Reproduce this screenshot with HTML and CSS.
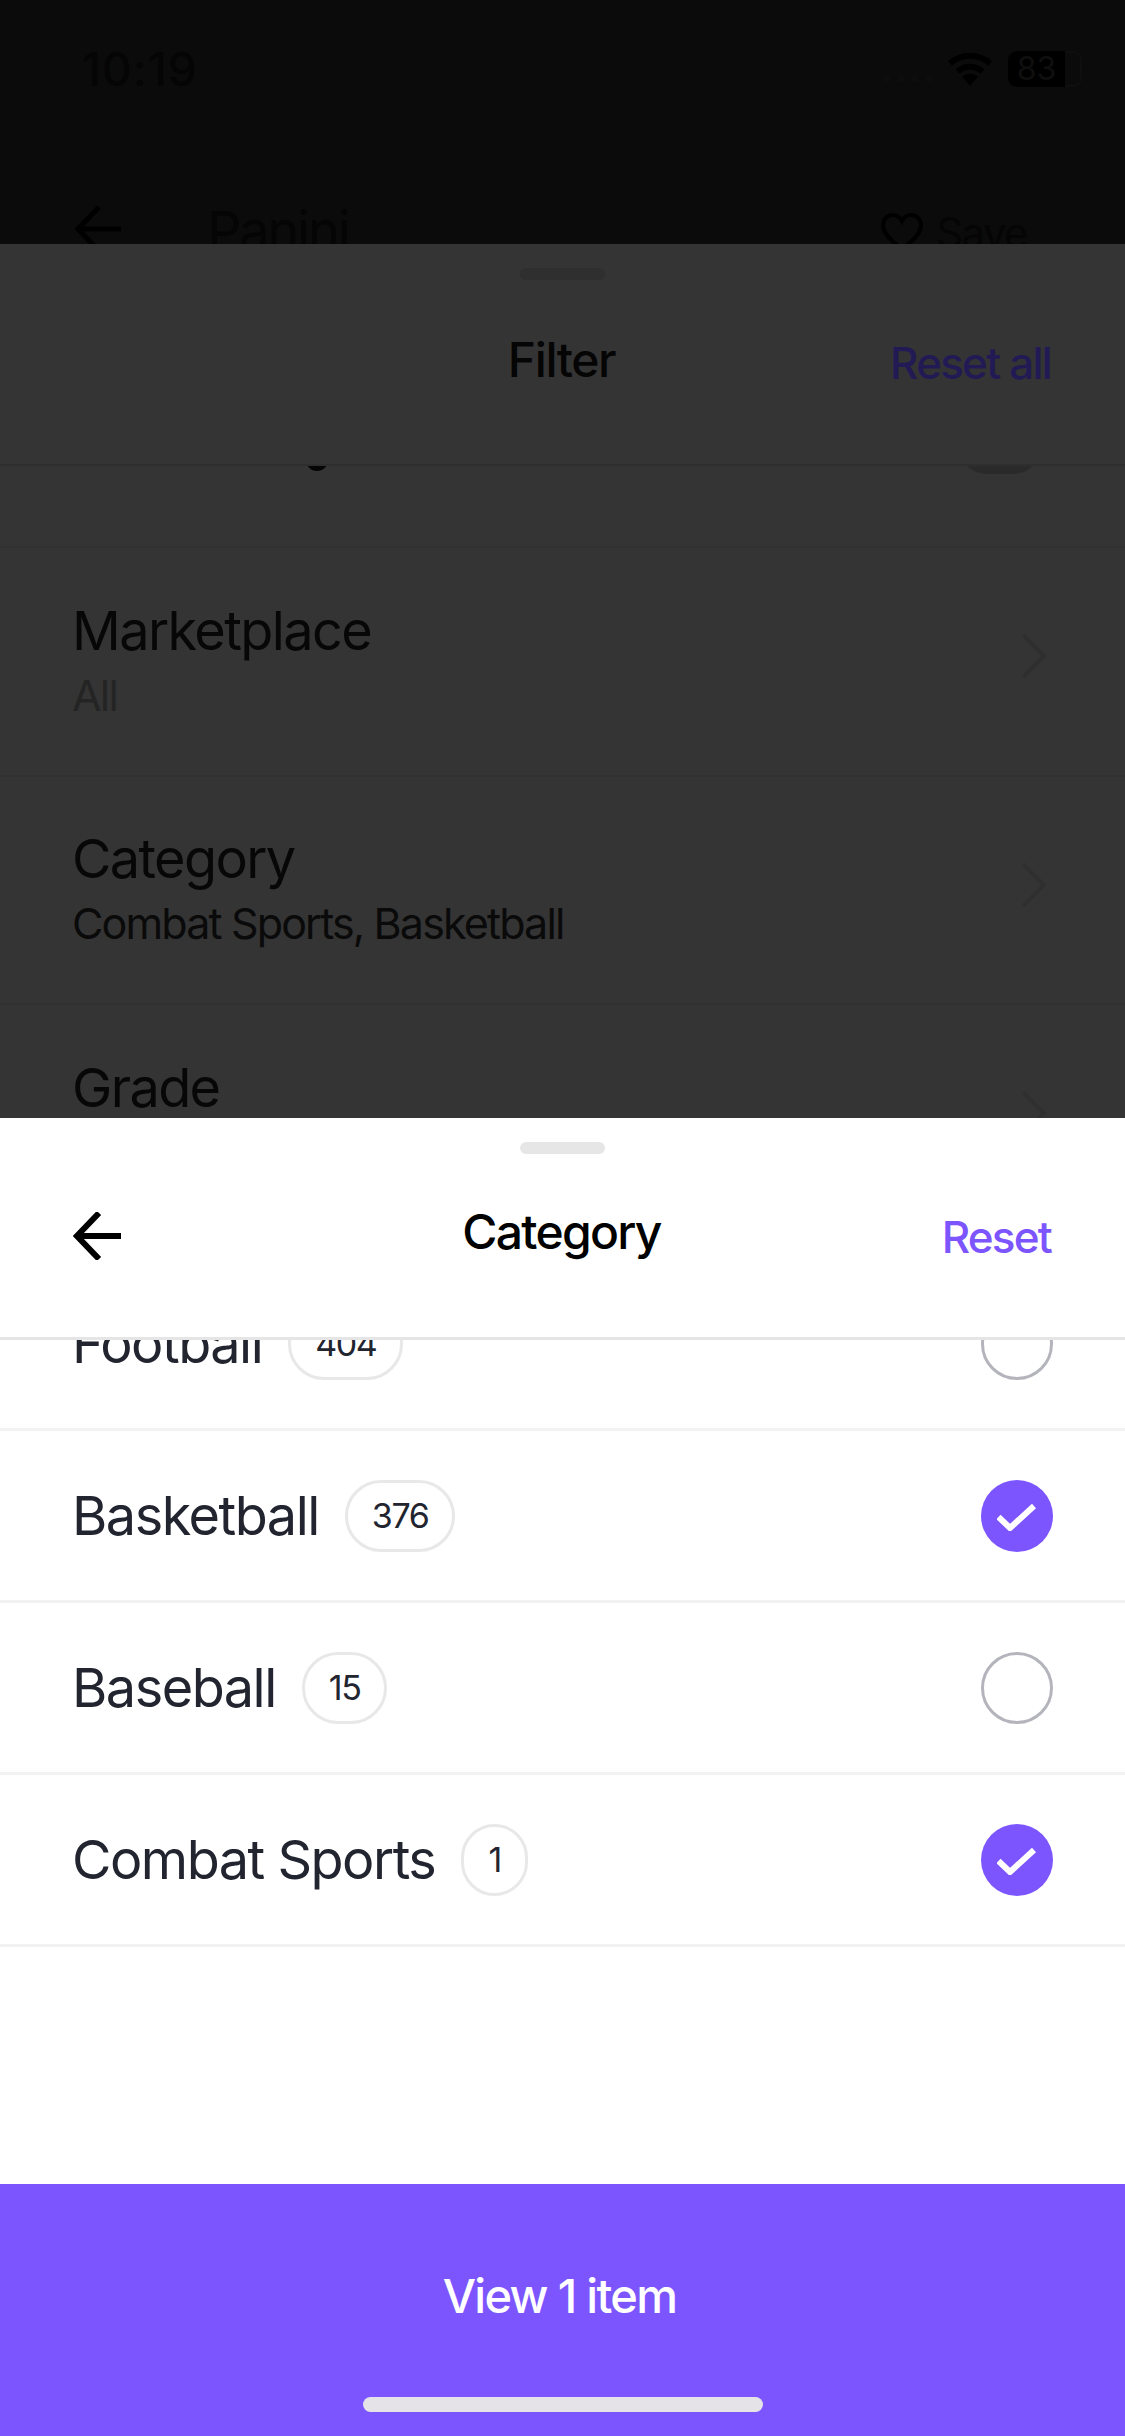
FILE: index.html
```html
<!DOCTYPE html>
<html lang="en">
<head>
<meta charset="utf-8">
<title>Category filter</title>
<link rel="stylesheet" href="styles.css">
</head>
<body>
<div class="screen">
  <section class="backdrop">
    <div class="status">
      <span class="time">10:19</span>
      <div class="status-icons">
        <svg class="signal" width="50" height="8" viewBox="0 0 50 8"><g fill="#0d0d0d"><circle cx="4" cy="4" r="3.500"/><circle cx="18" cy="4" r="3.500"/><circle cx="32" cy="4" r="3.500"/><circle cx="46" cy="4" r="3.500"/></g></svg>
        <svg class="wifi" width="46" height="34" viewBox="0 0 46 34"><path d="M23 34 15 24.500a12 12 0 0 1 16 0Z" fill="#000"/><path d="M10.500 19.500a18.500 18.500 0 0 1 25 0M3 11.500a29.500 29.500 0 0 1 40 0" fill="none" stroke="#000" stroke-width="6"/></svg>
        <div class="battery"><span class="battery-fill">83</span><span class="battery-tip"></span></div>
      </div>
    </div>
    <div class="topnav">
      <svg class="arrow arrow-dim" width="48" height="48" viewBox="0 0 48 48"><path d="M47 24H4M25 2 4 24l21 22" fill="none" stroke="#000" stroke-width="5"/></svg>
      <span class="topnav-title">Panini</span>
      <div class="save">
        <svg width="44" height="40" viewBox="0 0 44 40"><path d="M22 37C10 28 3 21 3 13 3 7 8 3 13 3c4 0 7 2 9 6 2-4 5-6 9-6 5 0 10 4 10 10 0 8-7 15-19 24Z" fill="none" stroke="#000" stroke-width="4"/></svg>
        <span>Save</span>
      </div>
    </div>
  </section>

  <section class="filter">
    <div class="handle handle-dim"></div>
    <header class="filter-head">
      <h2 class="filter-title">Filter</h2>
      <span class="filter-reset">Reset all</span>
    </header>
    <div class="filter-clip">
      <div class="filter-peek">
        <span class="peek-g"></span>
        <span class="peek-toggle"></span>
      </div>
      <div class="filter-row">
        <div><div class="filter-label">Marketplace</div><div class="filter-value filter-value-dim">All</div></div>
        <svg class="chevron" width="28" height="46" viewBox="0 0 28 46"><path d="m3 2 21 21L3 44" fill="none" stroke="#2f2f2f" stroke-width="4"/></svg>
      </div>
      <div class="filter-row">
        <div><div class="filter-label">Category</div><div class="filter-value">Combat Sports, Basketball</div></div>
        <svg class="chevron" width="28" height="46" viewBox="0 0 28 46"><path d="m3 2 21 21L3 44" fill="none" stroke="#2f2f2f" stroke-width="4"/></svg>
      </div>
      <div class="filter-row">
        <div><div class="filter-label">Grade</div><div class="filter-value filter-value-dim">All</div></div>
        <svg class="chevron" width="28" height="46" viewBox="0 0 28 46"><path d="m3 2 21 21L3 44" fill="none" stroke="#2f2f2f" stroke-width="4"/></svg>
      </div>
    </div>
  </section>

  <section class="sheet">
    <div class="handle"></div>
    <header class="sheet-head">
      <svg class="arrow" width="48" height="48" viewBox="0 0 48 48"><path d="M48 24H4M26 1 4 24l22 23" fill="none" stroke="#000" stroke-width="6"/></svg>
      <h2 class="sheet-title">Category</h2>
      <span class="sheet-reset">Reset</span>
    </header>
    <div class="list">
      <div class="list-inner">
        <div class="row"><span class="name">Football</span><span class="count">404</span><span class="radio"></span></div>
        <div class="row"><span class="name">Basketball</span><span class="count">376</span><span class="radio radio-on"><svg width="40" height="30" viewBox="0 0 40 30"><path d="M1.500 16 13 27 37 5" fill="none" stroke="#fff" stroke-width="6"/></svg></span></div>
        <div class="row"><span class="name">Baseball</span><span class="count">15</span><span class="radio"></span></div>
        <div class="row"><span class="name">Combat Sports</span><span class="count">1</span><span class="radio radio-on"><svg width="40" height="30" viewBox="0 0 40 30"><path d="M1.500 16 13 27 37 5" fill="none" stroke="#fff" stroke-width="6"/></svg></span></div>
      </div>
    </div>
    <footer class="cta">
      <span class="cta-label">View 1 item</span>
      <div class="home-bar"></div>
    </footer>
  </section>
</div>
</body>
</html>
```
FILE: styles.css
```css
* { box-sizing: border-box; margin: 0; padding: 0; }
html, body { width: 1125px; height: 2436px; overflow: hidden; }
body { font-family: Inter, "Liberation Sans", Arial, sans-serif; background: #fff; }
.screen { width: 1125px; height: 2436px; display: flex; flex-direction: column; }

.backdrop { height: 244px; flex: none; background: #0b0b0b; overflow: hidden; color: #050505; padding: 44px 43px 0 74px; }
.status { display: flex; justify-content: space-between; align-items: center; height: 50px; padding-left: 8px; }
.time { font-size: 46px; font-weight: 500; letter-spacing: 1px; }
.status-icons { display: flex; align-items: center; }
.signal { margin-right: 14px; margin-top: 20px; }
.battery { display: flex; align-items: center; margin-left: 15px; }
.battery-fill { width: 57px; height: 36px; border-radius: 9px 0 0 9px; background: #000; color: #0f0f0f; font-size: 32px; line-height: 36px; text-align: center; }
.battery-tip { width: 17px; height: 36px; border: 2px solid #0f0f0f; border-left: 0; border-radius: 0 9px 9px 0; }
.topnav { display: flex; align-items: center; margin-top: 112px; height: 46px; padding-right: 55px; }
.topnav-title { font-size: 54px; line-height: 60px; margin-left: 85px; flex: 1; letter-spacing: -2.200px; position: relative; top: 2px; }
.save { display: flex; align-items: center; gap: 12px; font-size: 42px; letter-spacing: -1.600px; position: relative; top: 3px; }

.filter { height: 874px; flex: none; background: #343434; overflow: hidden; }
.handle { width: 85px; height: 12px; margin: 24px auto 0; border-radius: 6px; background: #e6e6e6; }
.handle-dim { background: #2f2f2f; }
.filter-head { height: 186px; position: relative; display: flex; justify-content: flex-end; align-items: center; padding: 0 74px 0 0; border-bottom: 2px solid #2e2e2e; }
.filter-title { position: absolute; left: 0; right: 2px; top: 52px; text-align: center; font-size: 48px; line-height: 56px; font-weight: 500; letter-spacing: -1.400px; color: #050505; }
.filter-reset { font-size: 44px; line-height: 50px; margin-top: -18px; color: #221a55; font-weight: 500; letter-spacing: -1.800px; }
.filter-clip { height: 652px; overflow: hidden; }
.filter-peek { height: 82px; position: relative; border-bottom: 2px solid #313131; overflow: hidden; }
.peek-g { position: absolute; left: 306px; top: -17px; width: 22px; height: 22px; border-radius: 50%; background: #050505; }
.peek-toggle { position: absolute; left: 958px; top: -50px; width: 84px; height: 58px; border-radius: 29px; background: #2a2a2a; }
.filter-row { height: 228.500px; display: flex; justify-content: space-between; align-items: center; padding: 0 77px 0 72px; border-bottom: 2px solid #313131; }
.filter-label { font-size: 54px; line-height: 60px; letter-spacing: -1.600px; color: #070707; margin-top: -2px; }
.filter-value { font-size: 43px; line-height: 50px; margin-top: 9px; letter-spacing: -1.850px; color: #0a0a0a; }
.filter-value-dim { color: #242424; }
.chevron { margin-top: -10px; }

.sheet { flex: 1; min-height: 0; background: #fff; display: flex; flex-direction: column; }
.sheet-head { height: 186px; flex: none; position: relative; display: flex; justify-content: space-between; align-items: center; padding: 0 74px 0 73px; border-bottom: 3px solid #e5e5e5; }
.sheet-head .arrow { margin-top: -19px; }
.sheet-title { position: absolute; left: 0; right: 2px; top: 50px; text-align: center; font-size: 48px; line-height: 56px; font-weight: 500; letter-spacing: -1.700px; color: #000; }
.sheet-reset { font-size: 44px; line-height: 50px; margin-top: -18px; font-weight: 500; letter-spacing: -1.800px; color: #7c55ff; }
.list { flex: 1; min-height: 0; overflow: hidden; }
.list-inner { margin-top: -81px; }
.row { height: 172px; display: flex; align-items: center; padding: 0 72px 0 72px; border-bottom: 3px solid #f2f2f2; }
.name { font-size: 54px; letter-spacing: -1.500px; color: #22252f; }
.count { height: 72px; min-width: 67px; margin-left: 26px; padding: 0 24px; border: 3px solid #e8e8e8; border-radius: 36px; display: flex; align-items: center; justify-content: center; font-size: 34px; letter-spacing: -1.400px; color: #22252f; }
.radio { width: 72px; height: 72px; margin-left: auto; border: 3px solid #b4b4bc; border-radius: 50%; display: flex; align-items: center; justify-content: center; }
.radio-on { border: 0; background: #7c55ff; }

.cta { height: 252px; flex: none; background: #7c55ff; color: #fff; display: flex; flex-direction: column; align-items: center; }
.cta-label { margin-top: 84px; margin-right: 6px; font-weight: 500; font-size: 47px; line-height: 56px; letter-spacing: -1.700px; }
.home-bar { width: 400px; height: 15px; margin-top: 73px; border-radius: 8px; background: #e5e3e8; }
```
